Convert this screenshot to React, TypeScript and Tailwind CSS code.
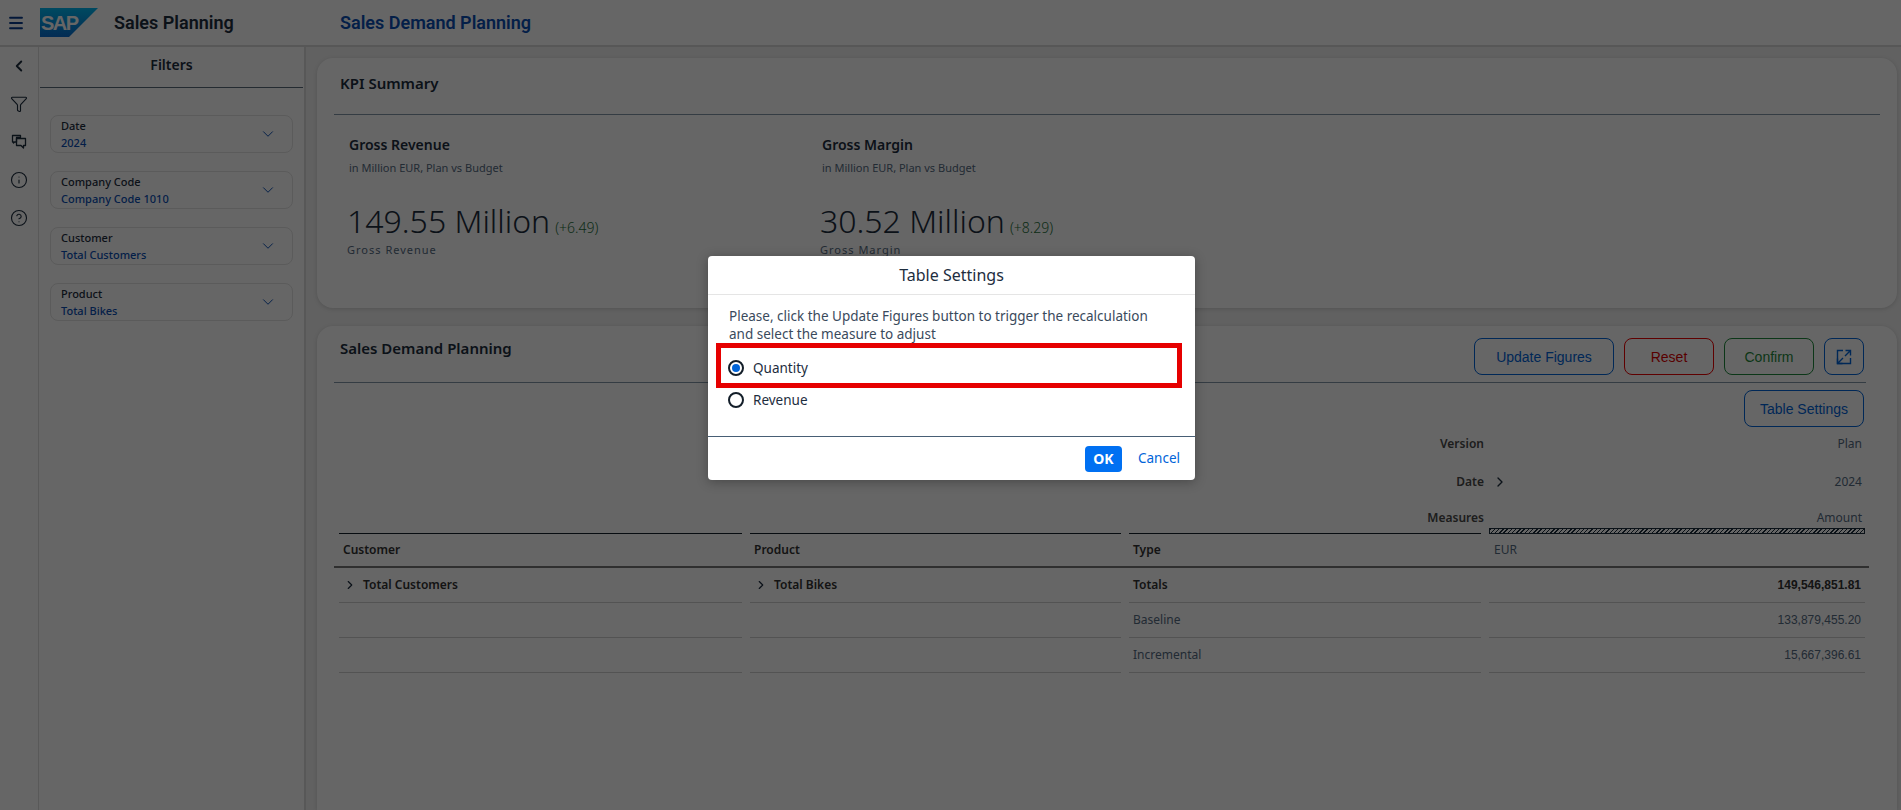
import { ChevronDown, ChevronLeft, ChevronRight, CircleHelp, Info, Funnel, Menu } from 'lucide-react';

const PLEX = "font-['Noto_Sans',sans-serif]";

const FILTERS = [
  { label: 'Date', value: '2024' },
  { label: 'Company Code', value: 'Company Code 1010' },
  { label: 'Customer', value: 'Total Customers' },
  { label: 'Product', value: 'Total Bikes' },
];

const KPIS = [
  { title: 'Gross Revenue', amount: '149.55 Million', delta: '(+6.49)' },
  { title: 'Gross Margin', amount: '30.52 Million', delta: '(+8.29)' },
];

const ROWS = [
  { type: 'Totals', amount: '149,546,851.81' },
  { type: 'Baseline', amount: '133,879,455.20' },
  { type: 'Incremental', amount: '15,667,396.61' },
];

function SapLogo() {
  return (
    <svg width="58" height="29" viewBox="0 0 58 29" className="shrink-0">
      <defs>
        <linearGradient id="sap" x1="0" y1="0" x2="0" y2="1">
          <stop offset="0" stopColor="#00b8f1" />
          <stop offset="1" stopColor="#0a6ed1" />
        </linearGradient>
      </defs>
      <polygon points="0,0 58,0 29,29 0,29" fill="url(#sap)" />
      <text x="1" y="22" fontFamily="Liberation Sans, sans-serif" fontWeight="700" fontSize="20" letterSpacing="-1.5" fill="#fff">
        SAP
      </text>
    </svg>
  );
}

function ChatIcon() {
  return (
    <svg width="18" height="18" viewBox="0 0 18 18" fill="none" stroke="#1d2d3e" strokeWidth="1.3">
      <path d="M2.5 2.5h8v2H6.500v4.500h-2l-1 1v-1h-1z" strokeLinejoin="round" />
      <path d="M6.500 5.500h9v7h-2v2.500l-2.500-2.500H6.500z" strokeLinejoin="round" />
    </svg>
  );
}

function ExpandIcon() {
  return (
    <svg width="16" height="16" viewBox="0 0 16 16" fill="none" stroke="#0064d9" strokeWidth="1.4">
      <path d="M7 1.500H1.500V14.500H14.500V9" />
      <path d="M9.500 1.500h5v5M14.500 1.500 9 7M1.500 14.500 7 9M1.500 9.500v5h5" />
    </svg>
  );
}

function OutlineButton({ label, className }: { label: string; className: string }) {
  return (
    <button className={`h-[37px] rounded-lg border text-sm font-['Liberation_Sans',sans-serif] ${className}`}>
      {label}
    </button>
  );
}

function Radio({ label, checked }: { label: string; checked?: boolean }) {
  return (
    <div className="flex h-8 items-center gap-[9px] pl-[18px]">
      <span className="flex h-4 w-4 items-center justify-center rounded-full border-2 border-[#131e29]">
        {checked && <span className="h-2 w-2 rounded-full bg-[#0064d9]" />}
      </span>
      <span className="text-[13.500px] text-[#1d2d3e]">{label}</span>
    </div>
  );
}

export default function App() {
  return (
    <div className={`relative flex h-[810px] w-[1901px] flex-col overflow-hidden bg-[#f2f2f2] text-[#1d2d3e] ${PLEX}`}>
      {/* Top bar */}
      <header className="flex h-[47px] shrink-0 items-center border-b-2 border-[#d9d9d9] bg-white">
        <Menu size={18} strokeWidth={2.500} className="ml-[7px] mr-[15px] text-[#0a3d8f]" />
        <SapLogo />
        <span className="ml-[16px] w-[226px] font-['Roboto',sans-serif] text-lg font-semibold text-[#1d2d3e]">Sales Planning</span>
        <span className="font-['Roboto',sans-serif] text-lg font-semibold text-[#0a4fb5]">Sales Demand Planning</span>
      </header>

      <div className="flex min-h-0 flex-1">
        {/* Icon rail */}
        <nav className="flex w-[39px] shrink-0 flex-col items-center gap-5 border-r border-[#dedede] bg-white pt-[10px] text-[#1d2d3e]">
          <ChevronLeft size={20} strokeWidth={2.500} className="h-[18px]" />
          <Funnel size={18} strokeWidth={1.500} />
          <ChatIcon />
          <Info size={18} strokeWidth={1.500} />
          <CircleHelp size={18} strokeWidth={1.500} />
        </nav>

        {/* Filters */}
        <aside className="w-[267px] shrink-0 border-r-2 border-[#dcdcdc] bg-white">
          <div className="ml-px mr-[1px] flex h-[41px] items-center justify-center border-b border-[#5b6b7b] pb-1 text-sm font-semibold">
            Filters
          </div>
          <div className="flex flex-col gap-[18px] pl-[11px] pr-[11px] pt-[27px]">
            {FILTERS.map((filter) => (
              <div key={filter.label} className="flex h-[38px] items-center justify-between rounded-lg border border-[#e3e3e3] bg-white pl-[10px] pr-[15px]">
                <div className="flex flex-col text-[11px] leading-[17px]">
                  <span className="font-medium">{filter.label}</span>
                  <span className="font-medium text-[#0a4fb5]">{filter.value}</span>
                </div>
                <ChevronDown size={18} strokeWidth={1.300} className="text-[#0a4fb5]" />
              </div>
            ))}
          </div>
        </aside>

        {/* Main */}
        <main className="flex min-w-0 flex-1 flex-col gap-[18px] pl-[11px] pr-[4px] pt-[11px]">
          <section className="h-[250px] shrink-0 rounded-2xl bg-white px-[17px] shadow-[0_1px_4px_rgba(0,0,0,0.15)]">
            <div className="flex h-[57px] items-start border-b border-[#8396a8] pl-[6px] pt-[15px] text-[15px] font-semibold leading-5">
              KPI Summary
            </div>
            <div className="flex pl-[15px] pt-[20px]">
              {KPIS.map((kpi) => (
                <div key={kpi.title} className="w-[473px]">
                  <div className="text-sm font-semibold leading-5">{kpi.title}</div>
                  <div className="mt-[5px] text-[11px] leading-4 text-[#556b82]">in Million EUR, Plan vs Budget</div>
                  <div className="mt-[24px] flex items-baseline gap-[5px] leading-[42px]">
                    <span className="-ml-[2px] text-[32px] font-light">{kpi.amount}</span>
                    <span className="text-sm font-light text-[#256f3a]">{kpi.delta}</span>
                  </div>
                  <div className="-ml-[2px] text-[11px] leading-4 tracking-[1px] text-[#556b82]">{kpi.title}</div>
                </div>
              ))}
            </div>
          </section>

          <section className="min-h-0 flex-1 rounded-t-2xl bg-white px-[17px] shadow-[0_1px_4px_rgba(0,0,0,0.15)]">
            <div className="mr-[14px] flex h-[57px] items-start justify-between border-b border-[#8396a8] pl-[6px] pt-[12px]">
              <span className="text-[15px] font-semibold leading-5">Sales Demand Planning</span>
              <div className="flex gap-[10px] pr-[2px]">
                <OutlineButton label="Update Figures" className="w-[140px] border-[#0064d9] text-[#0064d9]" />
                <OutlineButton label="Reset" className="w-[90px] border-[#e00] text-[#d00]" />
                <OutlineButton label="Confirm" className="w-[90px] border-[#1f8a3c] text-[#1f8a3c]" />
                <button className="flex h-[37px] w-[40px] items-center justify-center rounded-lg border border-[#0064d9]">
                  <ExpandIcon />
                </button>
              </div>
            </div>

            <div className="mr-[16px] mt-[7px] flex justify-end">
              <OutlineButton label="Table Settings" className="w-[120px] border-[#0064d9] text-[#0064d9]" />
            </div>

            {/* Column header rows */}
            <div className="mr-[14px] pl-[5px] font-['Noto_Sans',sans-serif] text-xs text-[#556b82]">
              <div className="mt-[8px] flex h-[18px] items-center">
                <span className="w-[1151px] text-right font-semibold text-[#4a4a4a]">Version</span>
                <span className="ml-[8px] w-[376px] pr-[4px] text-right">Plan</span>
              </div>
              <div className="mt-[20px] flex h-[18px] items-center">
                <span className="w-[1151px] text-right font-semibold text-[#4a4a4a]">Date</span>
                <span className="ml-[8px] flex w-[376px] items-center justify-between pr-[4px]">
                  <ChevronRight size={16} strokeWidth={2} className="text-[#1d2d3e]" />
                  <span>2024</span>
                </span>
              </div>
              <div className="mt-[18px] flex h-[18px] items-center">
                <span className="w-[1151px] text-right font-semibold text-[#4a4a4a]">Measures</span>
                <span className="ml-[8px] w-[376px] pr-[4px] text-right">Amount</span>
              </div>
            </div>

            <div className="mr-[11px] flex flex-col text-xs">
              <div className="flex h-[7px] items-end gap-[8px] pl-[5px]">
                <span className="h-px w-[403px] bg-[#131e29]" />
                <span className="h-px w-[371px] bg-[#131e29]" />
                <span className="h-px w-[352px] bg-[#131e29]" />
                <span className="h-[6px] w-[376px] border border-[#1d2d3e] bg-[repeating-linear-gradient(135deg,#1d2d3e_0,#1d2d3e_1px,#fff_1px,#fff_3px)]" />
              </div>
              <div className="flex h-[34px] items-center gap-[8px] border-b-2 border-[#777] pl-[5px] font-semibold text-[#333]">
                <span className="w-[403px] pl-[4px]">Customer</span>
                <span className="w-[371px] pl-[4px]">Product</span>
                <span className="w-[352px] pl-[4px]">Type</span>
                <span className="w-[376px] pl-[5px] font-normal text-[#556b82]">EUR</span>
              </div>
              {ROWS.map((row, i) => (
                <div key={row.type} className="flex h-[35px] gap-[8px] pl-[5px]">
                  <span className="flex w-[403px] items-center gap-[6px] border-b border-[#d0d0d0] pl-[4px] font-semibold text-[#333]">
                    {i === 0 && (
                      <>
                        <ChevronRight size={14} strokeWidth={2} className="text-[#1d2d3e]" />
                        Total Customers
                      </>
                    )}
                  </span>
                  <span className="flex w-[371px] items-center gap-[6px] border-b border-[#d0d0d0] pl-[4px] font-semibold text-[#333]">
                    {i === 0 && (
                      <>
                        <ChevronRight size={14} strokeWidth={2} className="text-[#1d2d3e]" />
                        Total Bikes
                      </>
                    )}
                  </span>
                  <span className={`flex w-[352px] items-center border-b border-[#d0d0d0] pl-[4px] ${i === 0 ? 'font-semibold text-[#333]' : 'text-[#556b82]'}`}>
                    {row.type}
                  </span>
                  <span className={`flex w-[376px] items-center justify-end border-b border-[#d0d0d0] pr-[4px] font-['Liberation_Sans',sans-serif] ${i === 0 ? 'font-bold text-[#333]' : 'text-[#556b82]'}`}>
                    {row.amount}
                  </span>
                </div>
              ))}
            </div>
          </section>
        </main>
      </div>

      {/* Modal backdrop */}
      <div className="absolute inset-0 bg-black/60" />

      {/* Table Settings dialog */}
      <div className="absolute left-[708px] top-[256px] flex h-[224px] w-[487px] flex-col rounded-[4px] bg-white shadow-[0_2px_12px_rgba(0,0,0,0.3)]">
        <div className="flex h-[39px] shrink-0 items-center justify-center border-b border-[#e5e5e5] text-base text-[#1d2d3e]">
          Table Settings
        </div>
        <div className="flex-1 px-[21px] pt-[12px] text-[13.500px] leading-[18px] text-[#3a4a5c]">
          Please, click the Update Figures button to trigger the recalculation and select the measure to adjust
          <div className="-mx-[21px] mt-[9px] pl-[2px]">
            <Radio label="Quantity" checked />
            <Radio label="Revenue" />
          </div>
        </div>
        <div className="flex h-[44px] shrink-0 items-center justify-end gap-[16px] border-t border-[#475e75] pr-[15px]">
          <button className="h-[26px] w-[37px] rounded-[4px] bg-[#0070f2] text-sm font-bold text-white">OK</button>
          <button className="text-[13.500px] text-[#0064d9]">Cancel</button>
        </div>
      </div>

      {/* Red annotation box */}
      <div className="absolute left-[716px] top-[343px] h-[45px] w-[466px] border-[5px] border-[#e60000]" />
    </div>
  );
}
